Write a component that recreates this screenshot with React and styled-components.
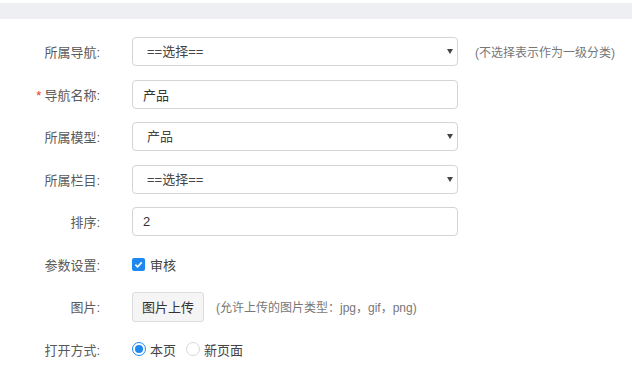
import styled, { createGlobalStyle } from "styled-components";

const GlobalStyle = createGlobalStyle`
  body {
    margin: 0;
    background: #fff;
    font-family: "Liberation Sans", "Noto Sans CJK SC", sans-serif;
    font-size: 13px;
    color: #333;
  }
`;

const Page = styled.div`
  width: 632px;
  height: 367px;
  overflow: hidden;
  padding-top: 3px;
  box-sizing: border-box;
`;

const TopBar = styled.div`
  height: 16px;
  background: #edeff3;
`;

const Form = styled.form`
  padding-top: 18px;
  display: flex;
  flex-direction: column;
  gap: 13.5px;
`;

const Row = styled.div`
  display: flex;
  align-items: center;
  height: 29px;
`;

const Label = styled.label`
  width: 100px;
  margin-right: 32px;
  text-align: right;
  color: #5a5a5a;
  white-space: nowrap;
  flex-shrink: 0;
`;

const Required = styled.span`
  color: #e8332a;
  margin-right: 3px;
`;

const Field = styled.div`
  position: relative;
  width: 326px;
  height: 29px;
`;

const Input = styled.input`
  width: 100%;
  height: 100%;
  box-sizing: border-box;
  border: 1px solid #d4d4d4;
  border-radius: 4px;
  padding: 0 10px;
  font: inherit;
  color: #333;
  outline: none;
  background: #fff;
`;

const Select = styled.select`
  width: 100%;
  height: 100%;
  box-sizing: border-box;
  border: 1px solid #d4d4d4;
  border-radius: 4px;
  padding: 0 14px;
  font: inherit;
  color: #444;
  appearance: none;
  background: #fff;
  outline: none;
`;

const Arrow = styled.span`
  position: absolute;
  right: 5px;
  top: 12px;
  width: 0;
  height: 0;
  border-left: 3px solid transparent;
  border-right: 3px solid transparent;
  border-top: 5px solid #444;
  pointer-events: none;
`;

const Hint = styled.span`
  color: #777;
  font-size: 12px;
  margin-left: ${(p) => p.ml || 17}px;
  white-space: nowrap;
`;

const Choice = styled.label`
  display: inline-flex;
  align-items: center;
  color: #444;
  margin-right: ${(p) => p.mr || 0}px;
`;

const Check = styled.span`
  width: 13px;
  height: 13px;
  border-radius: 2px;
  background: #1e88f0;
  display: inline-flex;
  align-items: center;
  justify-content: center;
  margin-right: 5px;
`;

const Radio = styled.span`
  width: 14px;
  height: 14px;
  border-radius: 50%;
  box-sizing: border-box;
  border: 1px solid ${(p) => (p.on ? "#1e88f0" : "#d8d8d8")};
  display: inline-flex;
  align-items: center;
  justify-content: center;
  margin-right: 4px;
  background: #fff;
  &::after {
    content: "";
    display: ${(p) => (p.on ? "block" : "none")};
    width: 8px;
    height: 8px;
    border-radius: 50%;
    background: #1e88f0;
  }
`;

const UploadButton = styled.button`
  height: 30px;
  width: 72px;
  box-sizing: border-box;
  border: 1px solid #dcdcdc;
  border-radius: 3px;
  background: #f5f5f5;
  font: inherit;
  color: #333;
  padding: 0;
  cursor: pointer;
`;

const SelectField = ({ value }) => (
  <Field>
    <Select defaultValue={value}>
      <option>{value}</option>
    </Select>
    <Arrow />
  </Field>
);

export default function App() {
  return (
    <Page>
      <GlobalStyle />
      <TopBar />
      <Form>
        <Row>
          <Label>所属导航:</Label>
          <SelectField value="==选择==" />
          <Hint>(不选择表示作为一级分类)</Hint>
        </Row>
        <Row>
          <Label>
            <Required>*</Required>导航名称:
          </Label>
          <Field>
            <Input defaultValue="产品" />
          </Field>
        </Row>
        <Row>
          <Label>所属模型:</Label>
          <SelectField value="产品" />
        </Row>
        <Row>
          <Label>所属栏目:</Label>
          <SelectField value="==选择==" />
        </Row>
        <Row>
          <Label>排序:</Label>
          <Field>
            <Input defaultValue="2" />
          </Field>
        </Row>
        <Row>
          <Label>参数设置:</Label>
          <Choice>
            <Check>
              <svg width="9" height="9" viewBox="0 0 10 10">
                <path d="M1.5 5.2 L4 7.6 L8.6 2.6" fill="none" stroke="#fff" strokeWidth="1.8" />
              </svg>
            </Check>
            审核
          </Choice>
        </Row>
        <Row>
          <Label>图片:</Label>
          <UploadButton type="button">图片上传</UploadButton>
          <Hint ml={12}>(允许上传的图片类型：jpg，gif，png)</Hint>
        </Row>
        <Row>
          <Label>打开方式:</Label>
          <Choice mr={10}>
            <Radio on />
            本页
          </Choice>
          <Choice>
            <Radio />
            新页面
          </Choice>
        </Row>
      </Form>
    </Page>
  );
}
